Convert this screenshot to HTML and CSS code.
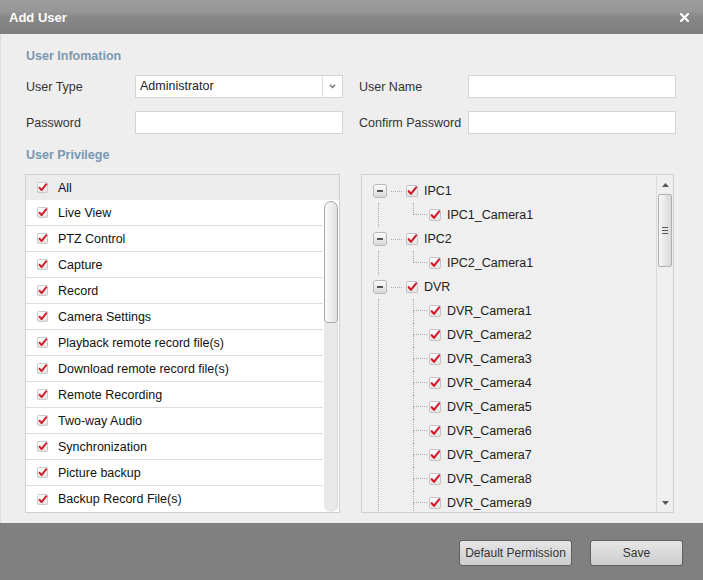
FILE: index.html
```html
<!DOCTYPE html>
<html>
<head>
<meta charset="utf-8">
<title>Add User</title>
<link rel="stylesheet" href="styles.css">
</head>
<body>
<svg class="defs" width="0" height="0" aria-hidden="true">
  <defs>
    <linearGradient id="cbg" x1="0" y1="0" x2="0" y2="1">
      <stop offset="0" stop-color="#ffffff"/>
      <stop offset="1" stop-color="#e2e2e2"/>
    </linearGradient>
    <symbol id="chk" viewBox="0 0 12 12">
      <rect x="0.5" y="0.5" width="11" height="11" rx="1.5" fill="url(#cbg)" stroke="#c4c4c4"/>
      <path d="M2.7 6.2 L5 8.8 L10.1 2.4" fill="none" stroke="#d01b29" stroke-width="2.1" stroke-linecap="round" stroke-linejoin="round"/>
    </symbol>
  </defs>
</svg>
<div class="dialog">
  <div class="titlebar">
    <span class="title">Add User</span>
    <svg class="close" viewBox="0 0 9 9"><path d="M1 1 L8 8 M8 1 L1 8" stroke="#fff" stroke-width="2.2" stroke-linecap="square"/></svg>
  </div>
  <div class="content">
    <div class="section-title">User Infomation</div>
    <div class="form-grid">
      <div class="label">User Type</div>
      <div class="field select">
        <span class="select-text">Administrator</span>
        <span class="select-arrow"><svg viewBox="0 0 7 5"><path d="M0.8 0.8 L3.5 3.6 L6.2 0.8" fill="none" stroke="#777" stroke-width="1.4"/></svg></span>
      </div>
      <div class="label label2">User Name</div>
      <div class="field"></div>
      <div class="label">Password</div>
      <div class="field"></div>
      <div class="label label2">Confirm Password</div>
      <div class="field"></div>
    </div>
    <div class="section-title">User Privilege</div>
    <div class="panels">
      <div class="priv-list">
        <div class="priv-head"><svg class="cb"><use href="#chk"/></svg><span class="lbl">All</span></div>
        <div class="priv-body">
          <div class="priv-rows">
            <div class="priv-row"><svg class="cb"><use href="#chk"/></svg><span class="lbl">Live View</span></div>
            <div class="priv-row"><svg class="cb"><use href="#chk"/></svg><span class="lbl">PTZ Control</span></div>
            <div class="priv-row"><svg class="cb"><use href="#chk"/></svg><span class="lbl">Capture</span></div>
            <div class="priv-row"><svg class="cb"><use href="#chk"/></svg><span class="lbl">Record</span></div>
            <div class="priv-row"><svg class="cb"><use href="#chk"/></svg><span class="lbl">Camera Settings</span></div>
            <div class="priv-row"><svg class="cb"><use href="#chk"/></svg><span class="lbl">Playback remote record file(s)</span></div>
            <div class="priv-row"><svg class="cb"><use href="#chk"/></svg><span class="lbl">Download remote record file(s)</span></div>
            <div class="priv-row"><svg class="cb"><use href="#chk"/></svg><span class="lbl">Remote Recording</span></div>
            <div class="priv-row"><svg class="cb"><use href="#chk"/></svg><span class="lbl">Two-way Audio</span></div>
            <div class="priv-row"><svg class="cb"><use href="#chk"/></svg><span class="lbl">Synchronization</span></div>
            <div class="priv-row"><svg class="cb"><use href="#chk"/></svg><span class="lbl">Picture backup</span></div>
            <div class="priv-row"><svg class="cb"><use href="#chk"/></svg><span class="lbl">Backup Record File(s)</span></div>
          </div>
          <div class="lscroll"><div class="lthumb"></div><div class="ltrack"></div></div>
        </div>
      </div>
      <div class="tree-box">
        <div class="tree">
          <div class="node-row"><span class="toggle"></span><span class="hconn"></span><svg class="tcb"><use href="#chk"/></svg><span class="tlbl">IPC1</span></div>
          <div class="children">
            <div class="child-row last"><span class="elbow"><span class="elbow-top"></span><span class="elbow-bot"></span></span><svg class="tcb"><use href="#chk"/></svg><span class="tlbl">IPC1_Camera1</span></div>
          </div>
          <div class="node-row"><span class="toggle"></span><span class="hconn"></span><svg class="tcb"><use href="#chk"/></svg><span class="tlbl">IPC2</span></div>
          <div class="children">
            <div class="child-row last"><span class="elbow"><span class="elbow-top"></span><span class="elbow-bot"></span></span><svg class="tcb"><use href="#chk"/></svg><span class="tlbl">IPC2_Camera1</span></div>
          </div>
          <div class="node-row"><span class="toggle"></span><span class="hconn"></span><svg class="tcb"><use href="#chk"/></svg><span class="tlbl">DVR</span></div>
          <div class="children">
            <div class="child-row"><span class="elbow"><span class="elbow-top"></span><span class="elbow-bot"></span></span><svg class="tcb"><use href="#chk"/></svg><span class="tlbl">DVR_Camera1</span></div>
            <div class="child-row"><span class="elbow"><span class="elbow-top"></span><span class="elbow-bot"></span></span><svg class="tcb"><use href="#chk"/></svg><span class="tlbl">DVR_Camera2</span></div>
            <div class="child-row"><span class="elbow"><span class="elbow-top"></span><span class="elbow-bot"></span></span><svg class="tcb"><use href="#chk"/></svg><span class="tlbl">DVR_Camera3</span></div>
            <div class="child-row"><span class="elbow"><span class="elbow-top"></span><span class="elbow-bot"></span></span><svg class="tcb"><use href="#chk"/></svg><span class="tlbl">DVR_Camera4</span></div>
            <div class="child-row"><span class="elbow"><span class="elbow-top"></span><span class="elbow-bot"></span></span><svg class="tcb"><use href="#chk"/></svg><span class="tlbl">DVR_Camera5</span></div>
            <div class="child-row"><span class="elbow"><span class="elbow-top"></span><span class="elbow-bot"></span></span><svg class="tcb"><use href="#chk"/></svg><span class="tlbl">DVR_Camera6</span></div>
            <div class="child-row"><span class="elbow"><span class="elbow-top"></span><span class="elbow-bot"></span></span><svg class="tcb"><use href="#chk"/></svg><span class="tlbl">DVR_Camera7</span></div>
            <div class="child-row"><span class="elbow"><span class="elbow-top"></span><span class="elbow-bot"></span></span><svg class="tcb"><use href="#chk"/></svg><span class="tlbl">DVR_Camera8</span></div>
            <div class="child-row"><span class="elbow"><span class="elbow-top"></span><span class="elbow-bot"></span></span><svg class="tcb"><use href="#chk"/></svg><span class="tlbl">DVR_Camera9</span></div>
          </div>
        </div>
        <div class="vscroll">
          <div class="sb-btn"><svg viewBox="0 0 7 4"><polygon points="0,4 3.5,0 7,4" fill="#555"/></svg></div>
          <div class="vthumb"><span class="grip"></span><span class="grip"></span><span class="grip"></span></div>
          <div class="vtrack"></div>
          <div class="sb-btn"><svg viewBox="0 0 7 4"><polygon points="0,0 7,0 3.5,4" fill="#555"/></svg></div>
        </div>
      </div>
    </div>
  </div>
  <div class="footer">
    <button class="btn btn-default">Default Permission</button>
    <button class="btn btn-save">Save</button>
  </div>
</div>
</body>
</html>
```
FILE: styles.css
```css
* { box-sizing: border-box; }
html, body { margin: 0; padding: 0; }
body {
  width: 703px;
  height: 580px;
  overflow: hidden;
  font-family: "Liberation Sans", Arial, sans-serif;
  font-size: 12.5px;
  color: #333;
  background: #808080;
}
.defs { display: block; width: 0; height: 0; overflow: hidden; }

.dialog { width: 703px; height: 580px; display: flex; flex-direction: column; }

.titlebar {
  height: 34px;
  flex: none;
  display: flex;
  align-items: center;
  justify-content: space-between;
  padding: 0 14px 0 9px;
  background: linear-gradient(#9c9c9c 0, #979797 11px, #868686 18px, #7f7f7f 100%);
}
.title { color: #fff; font-weight: bold; font-size: 13px; }
.close { width: 9px; height: 9px; display: block; }

.content {
  flex: none;
  background: #eeeeee;
  border-left: 1px solid #dedede;
  padding: 15px 0 10px 24px;
}
.section-title {
  font-size: 12.5px;
  font-weight: bold;
  line-height: 14px;
  height: 14px;
  color: #7b97b0;
  padding-left: 1px;
}

.form-grid {
  display: grid;
  grid-template-columns: 110px 208px 125px 208px;
  grid-template-rows: 23px 23px;
  row-gap: 13px;
  margin: 12px 0 14px;
  align-items: center;
}
.label { padding-left: 1px; color: #333; white-space: nowrap; }
.label2 { padding-left: 16px; }
.field {
  height: 23px;
  background: #fff;
  border: 1px solid #d4d4d4;
}
.select { display: flex; align-items: stretch; }
.select-text { flex: 1; padding-left: 4px; line-height: 20px; color: #222; }
.select-arrow {
  width: 20px;
  border-left: 1px solid #dddddd;
  display: flex;
  align-items: center;
  justify-content: center;
}
.select-arrow svg { width: 7px; height: 5px; display: block; }

.panels { display: flex; gap: 21px; height: 339px; margin-top: 12px; }

.priv-list {
  width: 315px;
  border: 1px solid #cfcfcf;
  background: #fff;
  display: flex;
  flex-direction: column;
}
.priv-head {
  height: 25px;
  flex: none;
  background: #ececec;
  display: flex;
  align-items: center;
  padding-left: 11px;
}
.cb { width: 11px; height: 11px; flex: none; display: block; }
.lbl { margin-left: 10px; color: #111; white-space: nowrap; }
.priv-body { flex: 1; display: flex; min-height: 0; }
.priv-rows { flex: 1; }
.priv-row {
  height: 26px;
  border-bottom: 1px solid #dddddd;
  display: flex;
  align-items: center;
  padding-left: 11px;
}
.priv-row:last-child { border-bottom: 0; }

.lscroll { width: 16px; flex: none; display: flex; flex-direction: column; padding: 1px 1px 0 1px; }
.lthumb {
  height: 122px;
  border: 1px solid #a8a8a8;
  border-radius: 7px 7px 3px 3px;
  background: linear-gradient(90deg, #fbfbfb, #e0e0e0);
}
.ltrack {
  flex: 1;
  background: #e9e9e9;
  border-right: 1px solid #d6d6d6;
  border-radius: 0 0 7px 7px;
}

.tree-box {
  width: 313px;
  border: 1px solid #cfcfcf;
  background: #efefef;
  display: flex;
  overflow: hidden;
}
.tree { flex: 1; padding-top: 4px; overflow: hidden; }
.node-row { height: 24px; display: flex; align-items: center; padding-left: 11px; }
.toggle {
  width: 14px;
  height: 14px;
  flex: none;
  border: 1px solid #b8b8b8;
  border-radius: 3px;
  background: linear-gradient(#fdfdfd, #d8d8d8);
  display: flex;
  align-items: center;
  justify-content: center;
}
.toggle::before { content: ""; width: 6px; height: 2px; background: #555; }
.hconn { width: 19px; flex: none; display: flex; padding: 0 4px; }
.hconn::before { content: ""; flex: 1; border-top: 1px dotted #aaa; }
.tcb { width: 12px; height: 12px; flex: none; display: block; }
.tlbl { margin-left: 6px; font-size: 12.5px; color: #222; white-space: nowrap; }

.children { margin-left: 16px; border-left: 1px dotted #aaa; }
.child-row { height: 24px; display: flex; align-items: center; padding-left: 34px; }
.elbow { width: 14px; flex: none; align-self: stretch; display: flex; flex-direction: column; }
.elbow-top { height: 12px; border-left: 1px dotted #aaa; border-bottom: 1px dotted #aaa; }
.elbow-bot { flex: 1; border-left: 1px dotted #aaa; }
.child-row.last .elbow-bot { border-left-color: transparent; }
.child-row .tcb { margin-left: 2px; }

.vscroll {
  width: 17px;
  flex: none;
  border-left: 1px solid #dcdcdc;
  display: flex;
  flex-direction: column;
}
.sb-btn { height: 19px; flex: none; display: flex; align-items: center; justify-content: center; }
.sb-btn svg { width: 7px; height: 4px; display: block; }
.vthumb {
  height: 73px;
  flex: none;
  margin: 0 1px;
  border: 1px solid #b0b0b0;
  border-radius: 2px;
  background: linear-gradient(90deg, #f7f7f7, #d8d8d8);
  display: flex;
  flex-direction: column;
  align-items: center;
  justify-content: center;
  gap: 2px;
}
.grip { width: 6px; height: 1px; background: #555; }
.vtrack { flex: 1; }

.footer {
  flex: 1;
  background: #808080;
  display: flex;
  justify-content: flex-end;
  align-items: flex-start;
  padding: 17px 20px 0 0;
  gap: 18px;
}
.btn {
  height: 26px;
  border: 1px solid #5f5f5f;
  border-radius: 3px;
  background: linear-gradient(#e6e6e6, #cdcdcd);
  font-family: "Liberation Sans", Arial, sans-serif;
  font-size: 12px;
  color: #333;
  padding: 0;
}
.btn-default { width: 113px; }
.btn-save { width: 93px; }
```
